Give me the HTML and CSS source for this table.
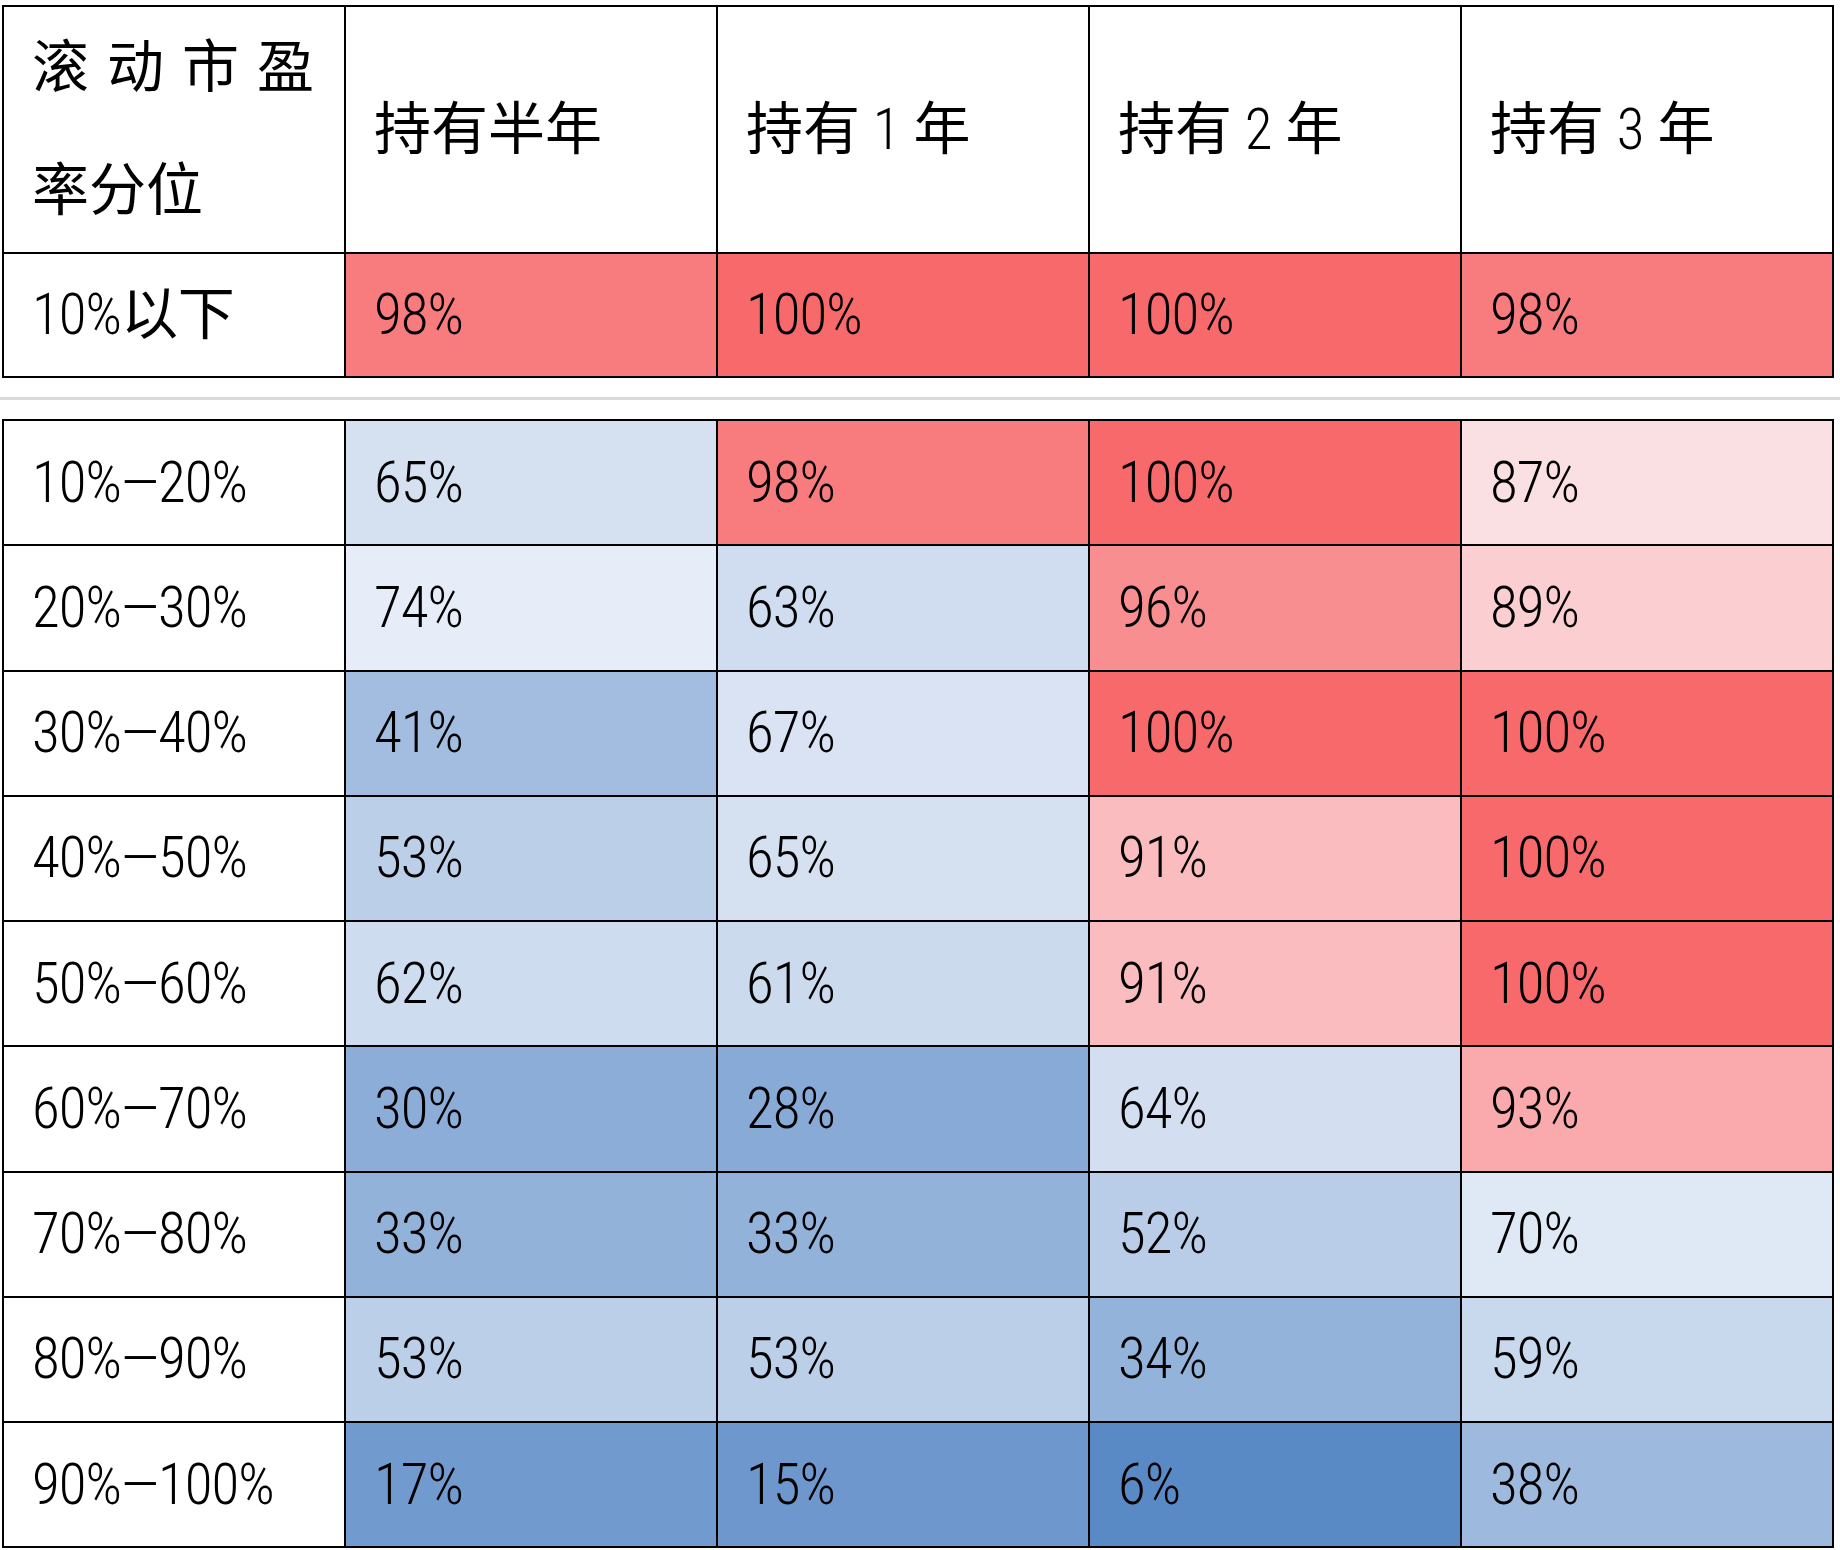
FILE: index.html
```html
<!DOCTYPE html>
<html lang="zh-CN">
<head>
<meta charset="utf-8">
<title>滚动市盈率分位 持有收益概率</title>
<link rel="stylesheet" href="styles.css">
</head>
<body>
<main class="page">
  <div class="grid grid-top" role="table">
    <div class="cell hd hd-first zh" role="columnheader">滚动市盈率分位</div>
    <div class="cell hd" role="columnheader"><span class="zh">持有半年</span></div>
    <div class="cell hd" role="columnheader"><span class="zh">持有</span>&nbsp;1&nbsp;<span class="zh">年</span></div>
    <div class="cell hd" role="columnheader"><span class="zh">持有</span>&nbsp;2&nbsp;<span class="zh">年</span></div>
    <div class="cell hd" role="columnheader"><span class="zh">持有</span>&nbsp;3&nbsp;<span class="zh">年</span></div>

    <div class="cell label" role="rowheader">10%<span class="zh">以下</span></div>
    <div class="cell" style="background:#F87B7E">98%</div>
    <div class="cell" style="background:#F8696B">100%</div>
    <div class="cell" style="background:#F8696B">100%</div>
    <div class="cell" style="background:#F87B7E">98%</div>
  </div>

  <hr class="sep">

  <div class="grid grid-bottom" role="table">
    <div class="cell label">10%—20%</div>
    <div class="cell" style="background:#D5E0F1">65%</div>
    <div class="cell" style="background:#F87B7E">98%</div>
    <div class="cell" style="background:#F8696B">100%</div>
    <div class="cell" style="background:#FBE0E3">87%</div>

    <div class="cell label">20%—30%</div>
    <div class="cell" style="background:#E7EDF8">74%</div>
    <div class="cell" style="background:#D0DDF0">63%</div>
    <div class="cell" style="background:#F98E90">96%</div>
    <div class="cell" style="background:#FBCED1">89%</div>

    <div class="cell label">30%—40%</div>
    <div class="cell" style="background:#A3BDE0">41%</div>
    <div class="cell" style="background:#D9E3F3">67%</div>
    <div class="cell" style="background:#F8696B">100%</div>
    <div class="cell" style="background:#F8696B">100%</div>

    <div class="cell label">40%—50%</div>
    <div class="cell" style="background:#BCCFE8">53%</div>
    <div class="cell" style="background:#D5E0F1">65%</div>
    <div class="cell" style="background:#FABCBE">91%</div>
    <div class="cell" style="background:#F8696B">100%</div>

    <div class="cell label">50%—60%</div>
    <div class="cell" style="background:#CEDCEF">62%</div>
    <div class="cell" style="background:#CCDAEE">61%</div>
    <div class="cell" style="background:#FABCBE">91%</div>
    <div class="cell" style="background:#F8696B">100%</div>

    <div class="cell label">60%—70%</div>
    <div class="cell" style="background:#8CADD8">30%</div>
    <div class="cell" style="background:#88AAD6">28%</div>
    <div class="cell" style="background:#D3DFF0">64%</div>
    <div class="cell" style="background:#FAA9AC">93%</div>

    <div class="cell label">70%—80%</div>
    <div class="cell" style="background:#92B2DA">33%</div>
    <div class="cell" style="background:#92B2DA">33%</div>
    <div class="cell" style="background:#BACDE8">52%</div>
    <div class="cell" style="background:#DFE8F5">70%</div>

    <div class="cell label">80%—90%</div>
    <div class="cell" style="background:#BCCFE8">53%</div>
    <div class="cell" style="background:#BCCFE8">53%</div>
    <div class="cell" style="background:#94B3DA">34%</div>
    <div class="cell" style="background:#C8D8ED">59%</div>

    <div class="cell label">90%—100%</div>
    <div class="cell" style="background:#719ACE">17%</div>
    <div class="cell" style="background:#6D97CD">15%</div>
    <div class="cell" style="background:#5A8AC6">6%</div>
    <div class="cell" style="background:#9DB9DD">38%</div>
  </div>
</main>
</body>
</html>
```

FILE: styles.css
```css
html, body {
  margin: 0;
  padding: 0;
  background: #ffffff;
}

body {
  font-family: "Roboto Condensed", "Noto Sans CJK SC", sans-serif;
  font-weight: 300;
  color: #000000;
}

.page {
  padding: 5px 0 0 2px;
}

.grid {
  display: grid;
  grid-template-columns: 342px repeat(4, 372px);
  border-top: 2px solid #000;
  border-left: 2px solid #000;
  width: max-content;
}

.grid-top {
  grid-template-rows: 247px 124px;
}

.grid-bottom {
  grid-template-rows: repeat(9, 125.25px);
}

.cell {
  box-sizing: border-box;
  border-right: 2px solid #000;
  border-bottom: 2px solid #000;
  padding: 0 20px 0 28px;
  font-size: 57px;
  line-height: 122px;
  letter-spacing: -1px;
  white-space: nowrap;
  display: flex;
  align-items: center;
  background: #ffffff;
}

.zh {
  font-weight: 400;
  letter-spacing: 0;
}

.hd {
  letter-spacing: 0;
}

.hd-first {
  display: block;
  white-space: normal;
  text-align: justify;
  padding: 0 30px 0 28px;
  line-height: 122.5px;
}

.sep {
  border: 0;
  height: 3px;
  background: #d9d9d9;
  margin: 19px 0 19px -2px;
  width: calc(100% + 2px);
}
```
